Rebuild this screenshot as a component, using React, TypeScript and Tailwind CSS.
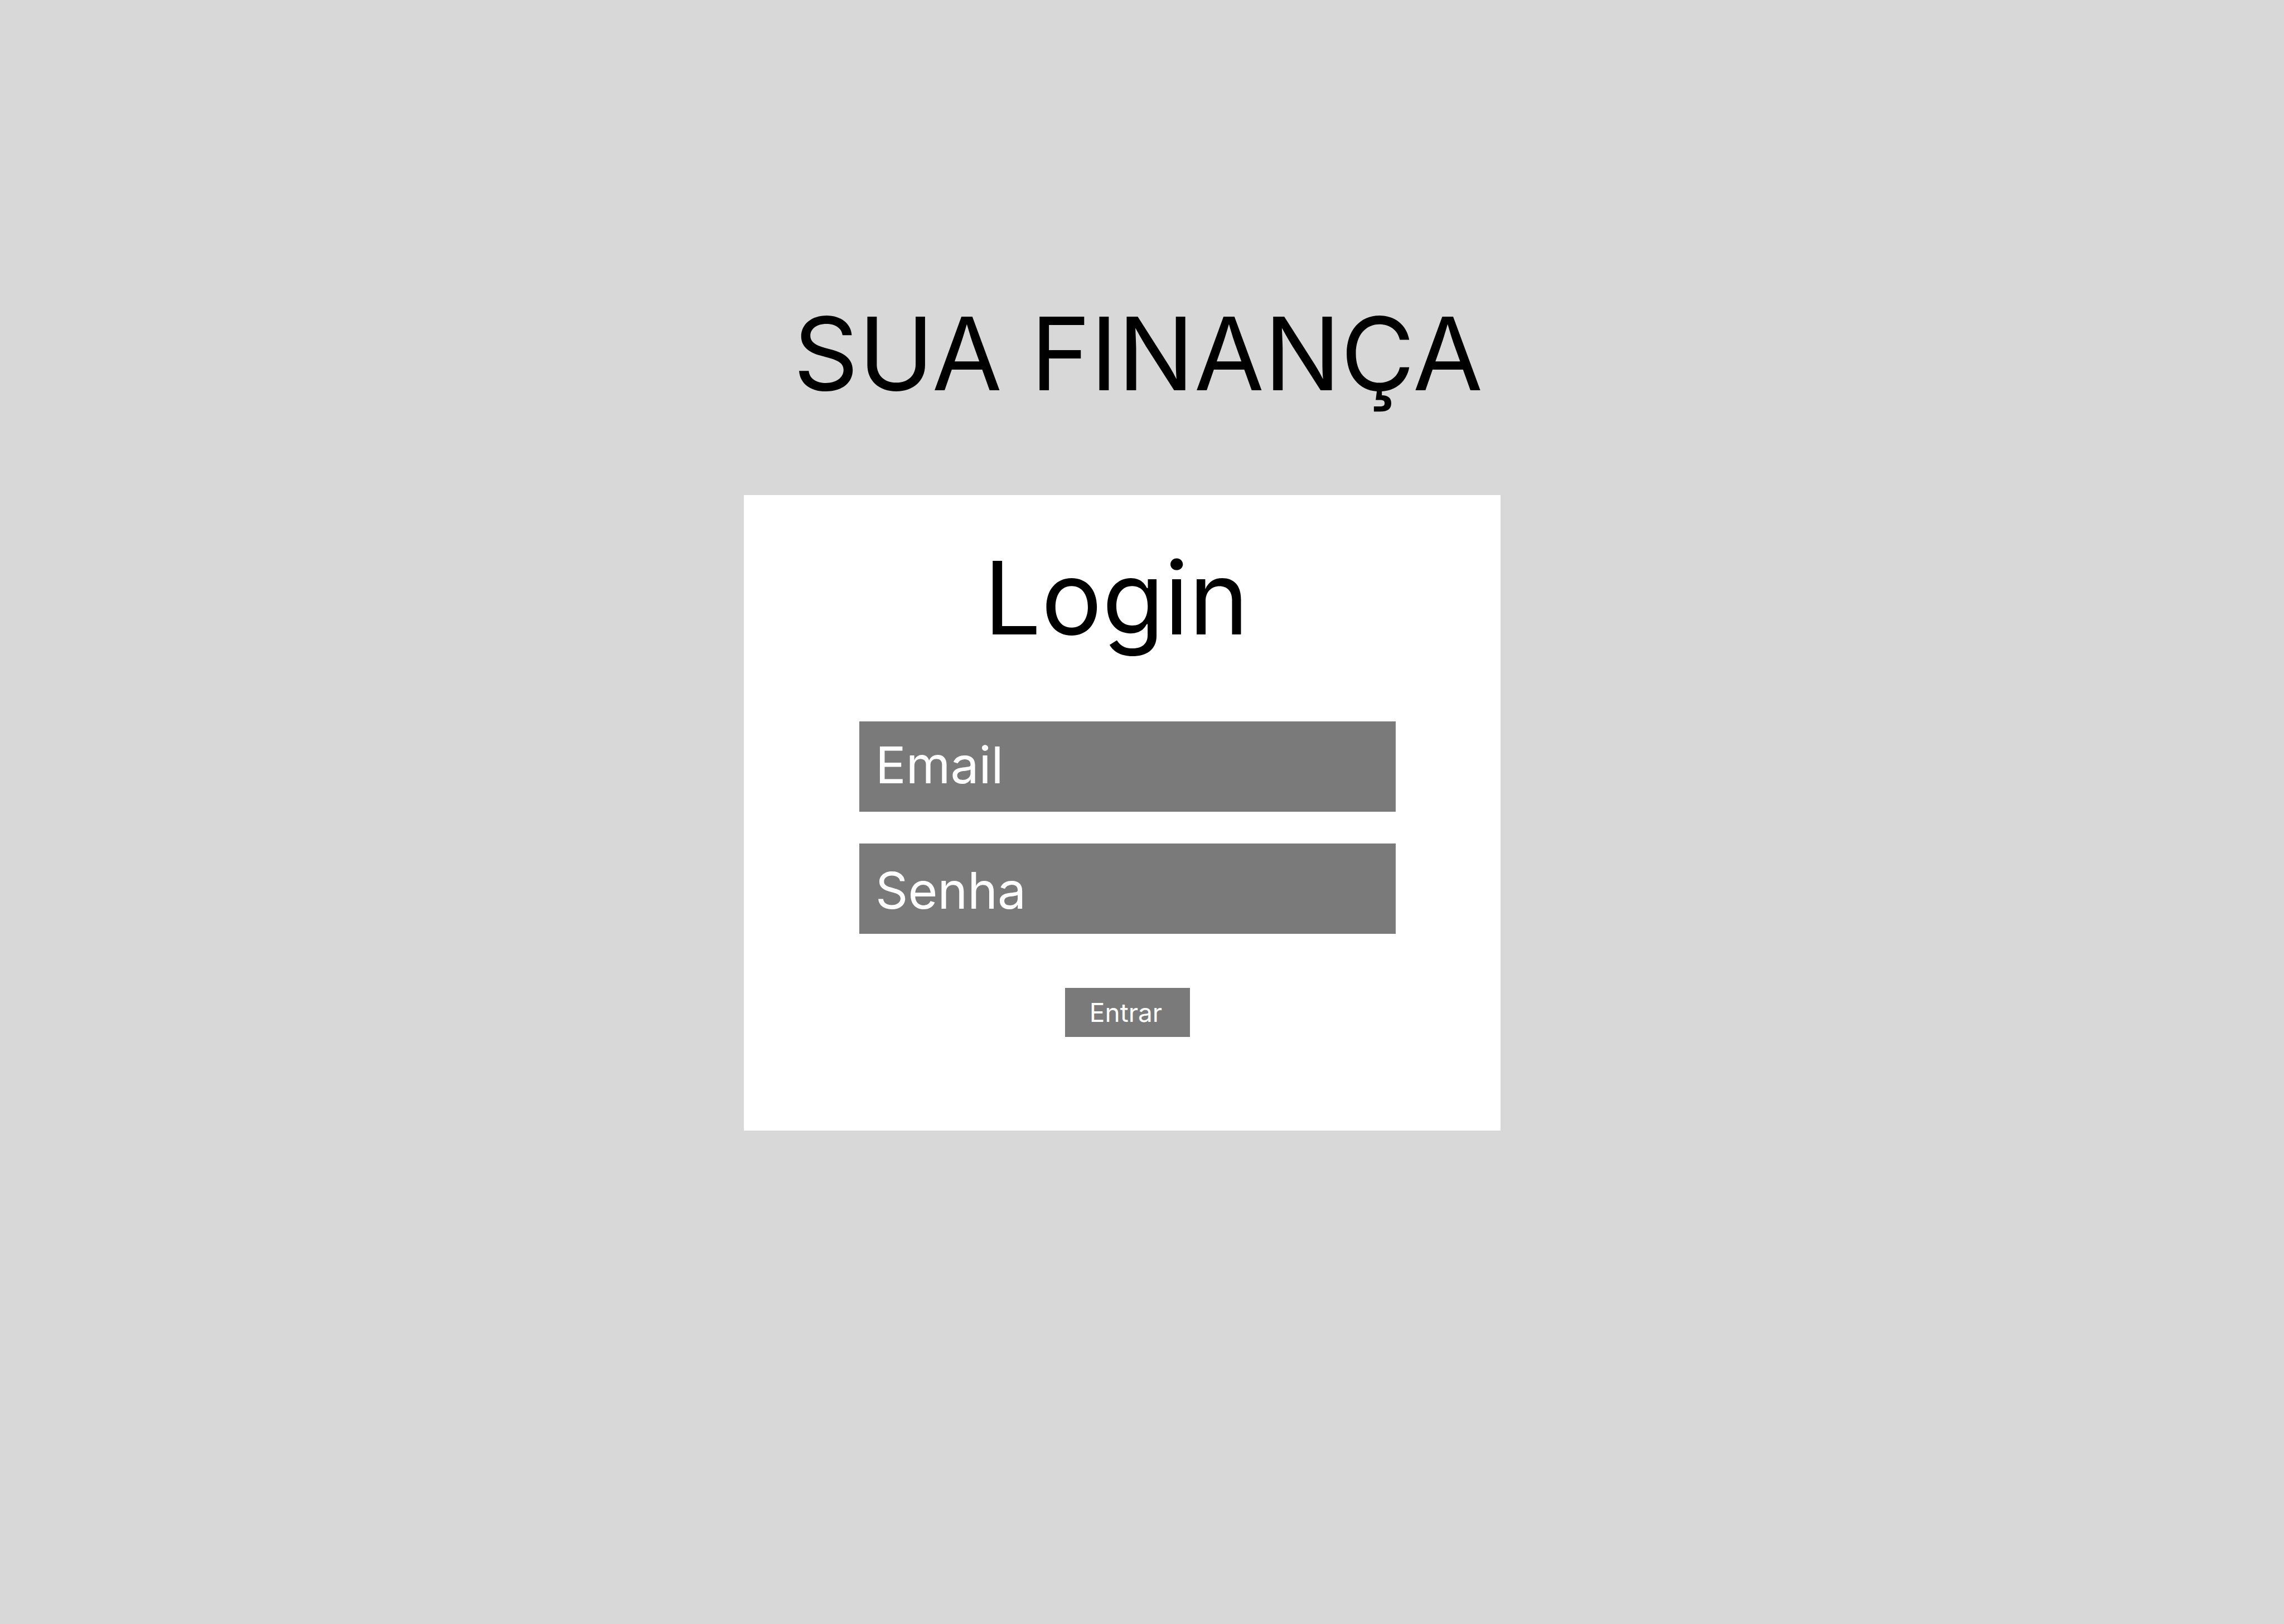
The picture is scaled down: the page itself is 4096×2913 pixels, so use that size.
import type { InputHTMLAttributes } from "react";

function Field({ className, ...props }: InputHTMLAttributes<HTMLInputElement>) {
  return (
    <input
      {...props}
      className={`h-[162px] w-full bg-[#7a7a7a] px-[29px] text-[91px] text-white outline-none placeholder:text-white placeholder:opacity-100 ${className}`}
    />
  );
}

export default function App() {
  return (
    <main className="flex min-h-screen flex-col items-center bg-[#d8d8d8] pt-[524px] pr-[71px] font-['Inter',sans-serif] text-black">
      <h1 className="mb-[144px] pl-[57px] text-[182px] leading-[220px] whitespace-nowrap">SUA FINANÇA</h1>
      <form
        className="flex w-full max-w-[1357px] flex-col items-center bg-white pt-[74px] pr-[188px] pb-[168px] pl-[207px]"
        onSubmit={(event) => event.preventDefault()}
      >
        <h2 className="mb-[112px] pr-[40px] text-[182px] leading-[220px]">Login</h2>
        <div className="flex w-full flex-col gap-[57px]">
          <Field type="email" name="email" aria-label="Email" placeholder="Email" className="pb-[6px]" />
          <Field type="password" name="senha" aria-label="Senha" placeholder="Senha" className="pt-[6px]" />
        </div>
        <button type="submit" className="mt-[97px] h-[88px] w-[224px] bg-[#7a7a7a] pr-[6px] text-[46px] text-white">
          Entrar
        </button>
      </form>
    </main>
  );
}
